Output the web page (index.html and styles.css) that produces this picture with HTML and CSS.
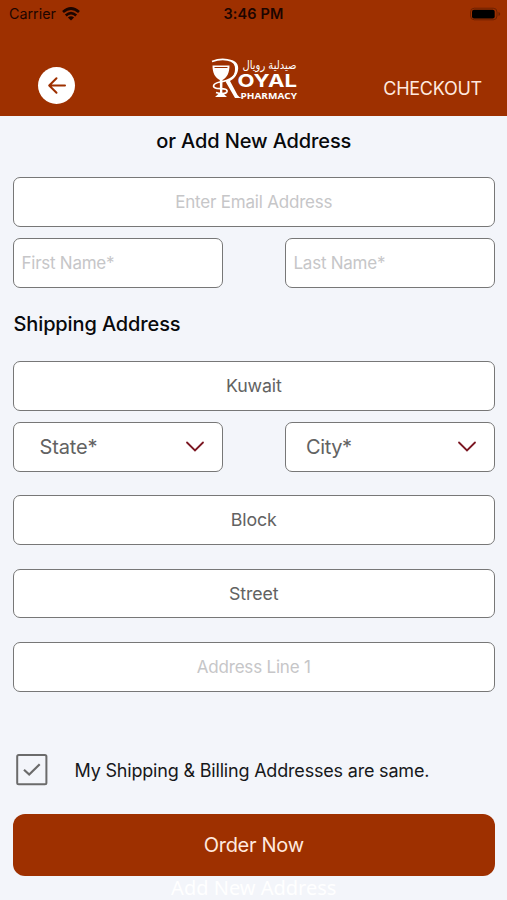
FILE: index.html
```html
<!DOCTYPE html>
<html lang="en">
<head>
<meta charset="utf-8">
<title>Checkout</title>
<link rel="stylesheet" href="styles.css">
</head>
<body>
<div class="screen">
  <header class="header">
    <div class="status">
      <div class="carrier"><span class="carrier-name">Carrier</span>
        <svg class="wifi" width="18" height="14" viewBox="0 0 18 14" fill="none" stroke="#1c0500" stroke-width="2.7"><path d="M1 5Q9-2 17 5"/><path d="M3.8 8.4Q9 3.8 14.2 8.4"/><path d="M9 13.6L5.9 10.5Q9 8 12.1 10.5Z" fill="#1c0500" stroke="none"/></svg>
      </div>
      <span class="time">3:46 PM</span>
      <svg class="battery" width="32" height="14" viewBox="0 0 32 14"><rect x="1.5" y="1.2" width="26.5" height="11.6" rx="3.8" fill="none" stroke="#6d2100"/><rect x="3" y="2.7" width="22.7" height="8.8" rx="2" fill="#000"/><path d="M29.5 5v4q1.7-.5 1.7-2t-1.7-2" fill="#6d2100"/></svg>
    </div>
    <nav class="nav">
      <button class="back" aria-label="Back"><svg width="37" height="37" viewBox="0 0 37 37" fill="none" stroke="#9e3000" stroke-width="2" stroke-linecap="round" stroke-linejoin="round"><path d="M27 18.5H11.5M18.5 11.2L11.2 18.5L18.5 25.8"/></svg></button>
      <svg class="logo" width="90" height="46" viewBox="0 0 90 46" fill="#fff">
        <text class="logo-arabic" x="60.5" y="11.5" text-anchor="middle" textLength="54" lengthAdjust="spacingAndGlyphs">صيدلية رويال</text>
        <path d="M3.500 8.500H20.500C20.500 16 18 20.500 13.500 23L13.300 35.500L18 40H6L11 35.500L10.800 23C6 20.500 3.500 16 3.500 8.500Z"/>
        <path d="M5.500 10.500H18.500" stroke="#9e3000" stroke-width="1"/>
        <path d="M3 4.500C12 1 27 1 27.500 12C27.500 20 20 23.500 11 25C3 26.500 3 31 8 31.500C14 32 18.500 31.500 18 34.500C17.500 37 11 37 7 35.500" fill="none" stroke="#fff" stroke-width="1.700"/>
        <path d="M20 2.500C27 3 30 8 29 13C28 19 24 22.500 21 24L28.500 38Q30 40.500 33 41H26L16.500 24.500C23 22 26 18 26 12C26 7 24 4 20 2.500Z"/>
        <text class="logo-name" x="28.500" y="30" textLength="59.500" lengthAdjust="spacingAndGlyphs">OYAL</text>
        <text class="logo-sub" x="31.500" y="41.500" textLength="56.500" lengthAdjust="spacingAndGlyphs">PHARMACY</text>
      </svg>
      <span class="title">CHECKOUT</span>
    </nav>
  </header>
  <main class="form">
    <h1 class="heading centered">or Add New Address</h1>
    <div class="field placeholder">Enter Email Address</div>
    <div class="row">
      <div class="field placeholder left">First Name*</div>
      <div class="field placeholder left">Last Name*</div>
    </div>
    <h2 class="heading section">Shipping Address</h2>
    <div class="field value">Kuwait</div>
    <div class="row">
      <div class="field select"><span class="state">State*</span><svg width="20" height="12" viewBox="0 0 20 12" fill="none" stroke="#7b1722" stroke-width="1.8" stroke-linecap="round"><path d="M2 1.5L10 9.5L18 1.5"/></svg></div>
      <div class="field select city"><span>City*</span><svg width="20" height="12" viewBox="0 0 20 12" fill="none" stroke="#7b1722" stroke-width="1.8" stroke-linecap="round"><path d="M2 1.5L10 9.5L18 1.5"/></svg></div>
    </div>
    <div class="stack">
      <div class="field value">Block</div>
      <div class="field value">Street</div>
      <div class="field placeholder">Address Line 1</div>
    </div>
    <div class="same">
      <svg width="32" height="32" viewBox="0 0 32 32" fill="none" stroke="#6b6b6b"><rect x="1.2" y="1" width="29.2" height="29.2" rx="1.5" stroke-width="2" /><path d="M8 15.8L13.2 20.5L23.7 10.2" stroke-width="2.2"/></svg>
      <span class="same-label">My Shipping &amp; Billing Addresses are same.</span>
    </div>
    <button class="order">Order Now</button>
    <div class="ghost">Add New Address</div>
  </main>
</div>
</body>
</html>
```
FILE: styles.css
```css
* { box-sizing: border-box; }
body { margin: 0; font-family: Inter, "Liberation Sans", sans-serif; }
.screen { width: 507px; height: 900px; overflow: hidden; background: #f3f5fa; }
.header { height: 115.5px; background: #9e3000; }
.status { height: 27px; display: grid; grid-template-columns: 1fr auto 1fr; align-items: center; padding: 0 9px 0 9px; color: #1c0500; font-size: 14.3px; }
.carrier { display: flex; align-items: center; gap: 6px; }
.time { font-weight: 600; font-size: 14.5px; letter-spacing: 0.15px; }
.battery { justify-self: end; margin-right: -3px; }
.nav { height: 88px; display: grid; grid-template-columns: 1fr 90px 1fr; align-items: center; padding: 0 25px 0 37.5px; }
.back { width: 37px; height: 37px; padding: 0; border: 0; border-radius: 50%; background: #fff; margin-top: 28px; }
.back svg { display: block; }
.logo { margin: 17px 0 0 -6px; overflow: visible; }
.logo-arabic { font: 400 12px "DejaVu Sans", sans-serif; }
.logo-name { font: 700 18px Inter, sans-serif; }
.logo-sub { font: 700 9px "Open Sans", sans-serif; }
.title { justify-self: end; margin-top: 34px; color: #ffe9df; font-size: 18px; letter-spacing: -0.25px; }
.form { padding: 0 12px 0 12.5px; }
.heading { margin: 0; height: 61.5px; padding-top: 13.5px; font-size: 20px; line-height: 25px; font-weight: 500; letter-spacing: -0.12px; color: #08090b; }
.centered { text-align: center; }
.section { height: 73.5px; padding: 24.5px 0 0 1px; }
.field { height: 49.5px; border: 1.5px solid #777; border-radius: 7px; background: #fff; display: flex; align-items: center; justify-content: center; font-size: 17px; }
.placeholder { color: #c6c6c8; letter-spacing: -0.2px; }
.value { color: #626262; font-size: 17.8px; letter-spacing: -0.15px; }
.row { display: grid; grid-template-columns: 210.5px 210.5px; justify-content: space-between; margin-top: 11.5px; }
.left { justify-content: flex-start; padding-left: 8px; letter-spacing: -0.25px; }
.select { justify-content: space-between; padding: 0 17px 0 26px; color: #626262; font-size: 20px; letter-spacing: -0.15px; }
.city { padding-left: 20.5px; }
.city span { letter-spacing: -0.4px; }
.stack { display: grid; gap: 24px; margin-top: 23.5px; }
.same { display: flex; align-items: center; gap: 27px; height: 32px; margin: 62.5px 0 28px 3px; font-size: 18px; letter-spacing: -0.19px; color: #17181a; }
.order { display: block; width: 100%; height: 61.5px; padding-top: 2px; border: 0; border-radius: 12px; background: #9e3000; color: #ffe9df; font: 20px Inter, sans-serif; letter-spacing: -0.3px; }
.ghost { text-align: center; color: #fff; font: 20px/24px "Noto Sans", sans-serif; }
```
